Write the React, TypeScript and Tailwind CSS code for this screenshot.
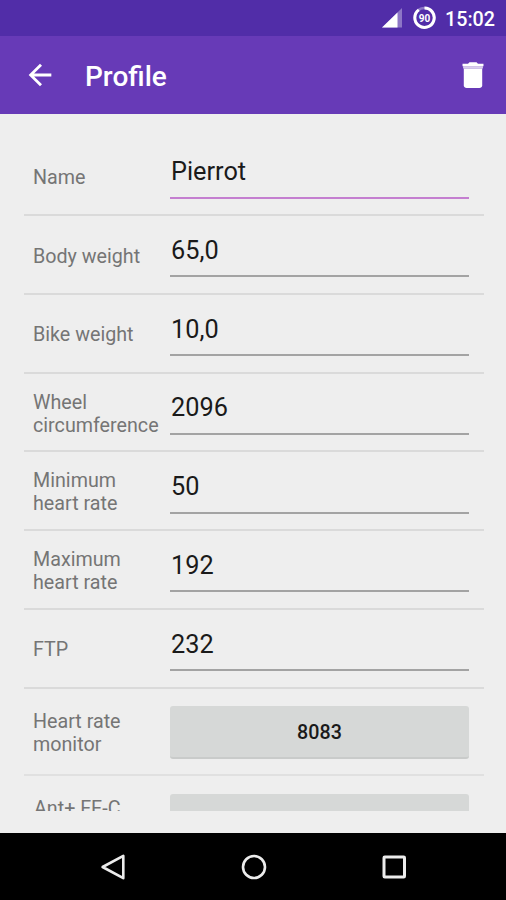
import type { ReactNode } from "react";

type Field = {
  id: string;
  label: string;
  value: string;
  focused?: boolean;
};

const fields: Field[] = [
  { id: "name", label: "Name", value: "Pierrot", focused: true },
  { id: "body", label: "Body weight", value: "65,0" },
  { id: "bike", label: "Bike weight", value: "10,0" },
  { id: "wheel", label: "Wheel circumference", value: "2096" },
  { id: "hr-min", label: "Minimum heart rate", value: "50" },
  { id: "hr-max", label: "Maximum heart rate", value: "192" },
  { id: "ftp", label: "FTP", value: "232" },
];

function StatusBar() {
  return (
    <div className="flex h-9 shrink-0 items-center justify-end bg-[#512da8] pr-[11px] text-white">
      <svg width="22" height="22" viewBox="0 0 22 22" className="mt-[2px] mr-[9px]" aria-hidden="true">
        <path d="M1 19.5 21 0V19.5Z" fill="#fff" fillOpacity="0.35" />
        <path d="M1 19.5 16.5 4.5V19.5Z" fill="#fff" />
      </svg>
      {/* Battery ring */}
      <svg width="24" height="24" viewBox="0 0 24 24" className="mr-[9px]" aria-hidden="true">
        <circle cx="12.5" cy="11.7" r="9.7" fill="none" stroke="#fff" strokeOpacity="0.35" strokeWidth="2.6" />
        <path d="M12.5 2A9.7 9.7 0 1 1 6.8 3.85" fill="none" stroke="#fff" strokeWidth="3" />
        <text x="12.5" y="15.8" textAnchor="middle" fontSize="11.5" fontWeight="700" fill="#fff" textLength="11.5" lengthAdjust="spacingAndGlyphs">
          90
        </text>
      </svg>
      <span className="pt-[4px] text-[19.7px] leading-none font-medium">15:02</span>
    </div>
  );
}

function Toolbar() {
  return (
    <header className="flex h-[78px] shrink-0 items-center bg-[#673ab7] pr-[16px] pl-[23px] text-white">
      <button aria-label="Back">
        <svg width="34" height="34" viewBox="0 0 24 24" fill="currentColor">
          <path d="M20 11H7.83l5.59-5.59L12 4l-8 8 8 8 1.41-1.41L7.83 13H20v-2z" />
        </svg>
      </button>
      <h1 className="ml-[28px] flex-1 pt-[4px] text-[28px] leading-none font-medium">Profile</h1>
      <button aria-label="Delete">
        <svg width="34" height="34" viewBox="0 0 24 24" fill="currentColor">
          <path d="M5.5 7.4V19.4c0 1.1.9 1.8 2 1.8h9c1.1 0 2-.7 2-1.8V7.4z" />
          <path d="M5 5.8h14V7.4H5z" fillOpacity="0.75" />
          <path d="M19.4 4h-3.9l-1-1h-5l-1 1H4.6v1.8h14.8V4z" />
        </svg>
      </button>
    </header>
  );
}

function Label({ children }: { children: ReactNode }) {
  return <div className="w-[137px] shrink-0 pt-[3px] pr-2 text-[19.7px] leading-[23px] text-[#757575]">{children}</div>;
}

function FieldRow({ label, value, focused }: Field) {
  return (
    <div className="flex h-[78.75px] shrink-0 items-center border-b-2 border-[#dadada] pr-[15px] pl-[9px]">
      <Label>{label}</Label>
      <div className="flex-1 self-stretch">
        <div
          className={`flex items-center border-b-2 pl-px text-[25.3px] leading-none text-[#1a1a1a] ${
            focused ? "h-[62px] border-[#c47fd0] pt-[9px]" : "h-[61.25px] border-[#a3a3a3] pt-[9.5px]"
          }`}
        >
          {value}
        </div>
      </div>
    </div>
  );
}

function NavigationBar() {
  return (
    <nav className="flex h-[67px] shrink-0 items-center justify-between bg-black pr-[98px] pl-[99px] text-[#ececec]">
      <svg width="28" height="28" viewBox="0 0 28 28" fill="none" stroke="currentColor" strokeWidth="2.6" strokeLinejoin="round">
        <path d="M24.3 2.8V25.2L3.6 14Z" />
      </svg>
      <svg width="28" height="28" viewBox="0 0 28 28" fill="none" stroke="currentColor" strokeWidth="2.6">
        <circle cx="14" cy="14" r="11" />
      </svg>
      <svg width="28" height="28" viewBox="0 0 28 28" fill="none" stroke="currentColor" strokeWidth="3">
        <rect x="4" y="4" width="20.5" height="20" rx="0.8" />
      </svg>
    </nav>
  );
}

export default function App() {
  return (
    <div className="flex h-[900px] w-[506px] flex-col overflow-hidden bg-[#eeeeee] font-['Roboto','Liberation_Sans',sans-serif]">
      <StatusBar />
      <Toolbar />

      {/* Scrolling form, cut off above the navigation bar */}
      <main className="mb-[22px] flex min-h-0 flex-1 flex-col overflow-hidden pt-[23.4px] pr-[22px] pl-6">
        {fields.map((f) => (
          <FieldRow key={f.id} {...f} />
        ))}

        <div className="flex h-[87.75px] shrink-0 items-center border-b-2 border-[#e0e0e0] pr-[15px] pl-[9px]">
          <Label>Heart rate monitor</Label>
          <button className="mt-[2px] h-[53px] flex-1 rounded-[3px] border-b-2 border-[#c9cbca] bg-[#d6d8d7] pt-[3px] text-[19.7px] leading-none font-medium text-[#1a1a1a]">
            8083
          </button>
        </div>

        <div className="flex h-[88px] shrink-0 items-start pt-[18px] pr-[15px] pl-[9px]">
          <div className="pl-px">
            <Label>Ant+ FE-C</Label>
          </div>
          <button className="-ml-px h-[52px] flex-1 rounded-[3px] bg-[#d6d8d7]" aria-label="Ant+ FE-C" />
        </div>
      </main>

      <NavigationBar />
    </div>
  );
}
